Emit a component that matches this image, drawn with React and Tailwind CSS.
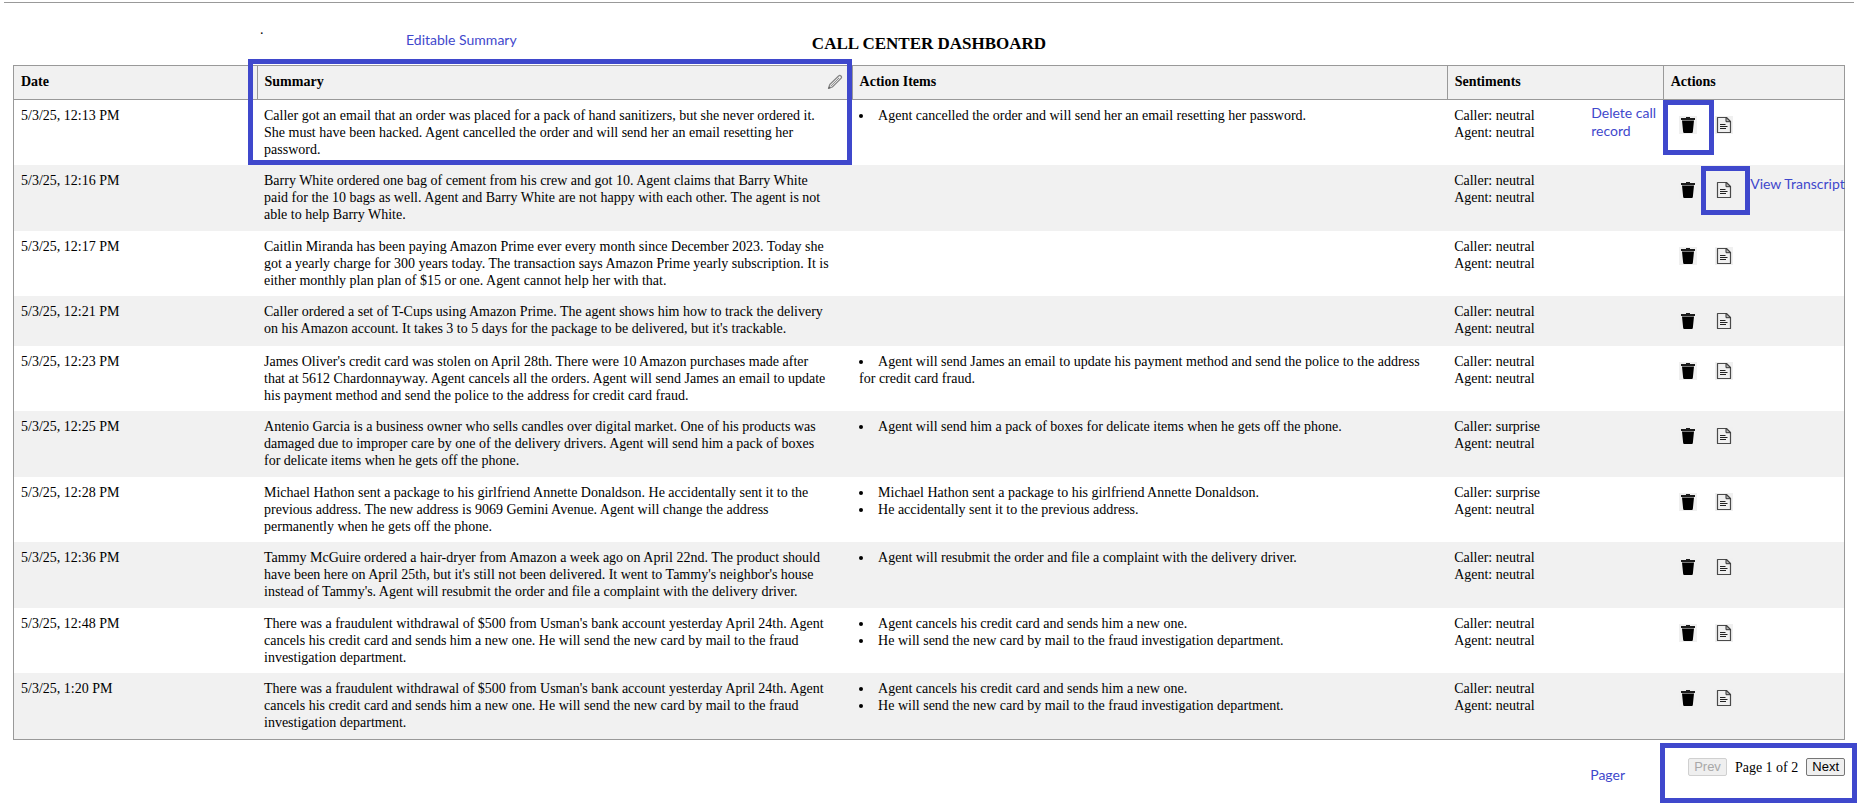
import React from "react";

const calls = [
  {
    date: "5/3/25, 12:13 PM",
    summary:
      "Caller got an email that an order was placed for a pack of hand sanitizers, but she never ordered it. She must have been hacked. Agent cancelled the order and will send her an email resetting her password.",
    items: ["Agent cancelled the order and will send her an email resetting her password."],
    caller: "neutral",
    agent: "neutral",
    note: "delete",
  },
  {
    date: "5/3/25, 12:16 PM",
    summary:
      "Barry White ordered one bag of cement from his crew and got 10. Agent claims that Barry White paid for the 10 bags as well. Agent and Barry White are not happy with each other. The agent is not able to help Barry White.",
    items: [],
    caller: "neutral",
    agent: "neutral",
    note: "transcript",
  },
  {
    date: "5/3/25, 12:17 PM",
    summary:
      "Caitlin Miranda has been paying Amazon Prime ever every month since December 2023. Today she got a yearly charge for 300 years today. The transaction says Amazon Prime yearly subscription. It is either monthly plan plan of $15 or one. Agent cannot help her with that.",
    items: [],
    caller: "neutral",
    agent: "neutral",
  },
  {
    date: "5/3/25, 12:21 PM",
    summary:
      "Caller ordered a set of T-Cups using Amazon Prime. The agent shows him how to track the delivery on his Amazon account. It takes 3 to 5 days for the package to be delivered, but it's trackable.",
    items: [],
    caller: "neutral",
    agent: "neutral",
  },
  {
    date: "5/3/25, 12:23 PM",
    summary:
      "James Oliver's credit card was stolen on April 28th. There were 10 Amazon purchases made after that at 5612 Chardonnayway. Agent cancels all the orders. Agent will send James an email to update his payment method and send the police to the address for credit card fraud.",
    items: [
      "Agent will send James an email to update his payment method and send the police to the address for credit card fraud.",
    ],
    caller: "neutral",
    agent: "neutral",
  },
  {
    date: "5/3/25, 12:25 PM",
    summary:
      "Antenio Garcia is a business owner who sells candles over digital market. One of his products was damaged due to improper care by one of the delivery drivers. Agent will send him a pack of boxes for delicate items when he gets off the phone.",
    items: ["Agent will send him a pack of boxes for delicate items when he gets off the phone."],
    caller: "surprise",
    agent: "neutral",
  },
  {
    date: "5/3/25, 12:28 PM",
    summary:
      "Michael Hathon sent a package to his girlfriend Annette Donaldson. He accidentally sent it to the previous address. The new address is 9069 Gemini Avenue. Agent will change the address permanently when he gets off the phone.",
    items: [
      "Michael Hathon sent a package to his girlfriend Annette Donaldson.",
      "He accidentally sent it to the previous address.",
    ],
    caller: "surprise",
    agent: "neutral",
  },
  {
    date: "5/3/25, 12:36 PM",
    summary:
      "Tammy McGuire ordered a hair-dryer from Amazon a week ago on April 22nd. The product should have been here on April 25th, but it's still not been delivered. It went to Tammy's neighbor's house instead of Tammy's. Agent will resubmit the order and file a complaint with the delivery driver.",
    items: ["Agent will resubmit the order and file a complaint with the delivery driver."],
    caller: "neutral",
    agent: "neutral",
  },
  {
    date: "5/3/25, 12:48 PM",
    summary:
      "There was a fraudulent withdrawal of $500 from Usman's bank account yesterday April 24th. Agent cancels his credit card and sends him a new one. He will send the new card by mail to the fraud investigation department.",
    items: [
      "Agent cancels his credit card and sends him a new one.",
      "He will send the new card by mail to the fraud investigation department.",
    ],
    caller: "neutral",
    agent: "neutral",
  },
  {
    date: "5/3/25, 1:20 PM",
    summary:
      "There was a fraudulent withdrawal of $500 from Usman's bank account yesterday April 24th. Agent cancels his credit card and sends him a new one. He will send the new card by mail to the fraud investigation department.",
    items: [
      "Agent cancels his credit card and sends him a new one.",
      "He will send the new card by mail to the fraud investigation department.",
    ],
    caller: "neutral",
    agent: "neutral",
  },
];

function TrashIcon() {
  return (
    <svg viewBox="0 0 18 18" className="block size-[18px]" aria-hidden="true">
      <path d="M7 1h4v1h5v2H2V2h5z" fill="#1c1c1c" />
      <path d="M3 4.600h12l-1.200 11.600a1 1 0 0 1-1 .8H5.200a1 1 0 0 1-1-.8z" fill="#000" />
    </svg>
  );
}

function TranscriptIcon() {
  return (
    <svg viewBox="0 0 18 18" className="block size-[18px]" fill="none" aria-hidden="true">
      <path d="M2.500 1.500h9l4 4v11h-13z" stroke="#4a4a4a" strokeWidth="1.200" strokeLinejoin="round" />
      <path d="M11 1.500v4.200h4.500z" stroke="#333" strokeWidth="1" fill="#bbb" />
      <path d="M5 8.500h5.500M5 10.500h7.500M5 12.500h6" stroke="#222" strokeWidth="1" />
    </svg>
  );
}

function PencilIcon() {
  return (
    <svg viewBox="0 0 16 16" className="block size-4" fill="none" aria-hidden="true">
      <path
        d="M1.500 14.500l1.300-4L11.600 2a1.600 1.600 0 0 1 2.400 2.300l-8.700 8.700z"
        stroke="#858585"
        strokeWidth="1.200"
        strokeLinejoin="round"
      />
      <path d="M3.600 12.300L12 4M10.300 3.200l2.500 2.500" stroke="#8d8d8d" strokeWidth="1" />
      <path d="M1.300 14.700l.8-2.400 1.600 1.600z" fill="#666" />
    </svg>
  );
}

const noteText = "absolute font-['Lato',sans-serif] text-[14px] leading-[18px] font-normal text-[#3f48cc]";
const noteBox = "pointer-events-none absolute border-5 border-[#3f48cc]";
const headCell = "relative border border-[#999] px-[7px] pt-[7px] pb-[9px] text-left font-bold";
const bodyCell = "px-[7px] pt-[7px] pb-[7px] align-top group-even:pb-2";
const textCell = "pl-[7px] pr-5 pt-[7px] pb-[7px] align-top group-even:pb-2";

function CallRow({ call }) {
  return (
    <tr className="group h-[50px] even:bg-[#f1f1f1]">
      <td className={bodyCell}>{call.date}</td>
      <td className={textCell}>{call.summary}</td>
      <td className={textCell}>
        {call.items.length > 0 && (
          <ul className="list-inside list-disc">
            {call.items.map((item) => (
              <li key={item}>{item}</li>
            ))}
          </ul>
        )}
      </td>
      <td className={bodyCell + " relative"}>
        <p>Caller: {call.caller}</p>
        <p>Agent: {call.agent}</p>
        {call.note === "delete" && (
          <p className={noteText + " top-1 right-1 w-[68px]"}>Delete call record</p>
        )}
      </td>
      <td className={bodyCell + " relative"}>
        <div className="flex gap-[18px] px-[9px] pt-[9px]">
          <button type="button" aria-label="Delete" className="bg-[#f0f0f0]">
            <TrashIcon />
          </button>
          <button type="button" aria-label="Transcript" className="bg-[#f0f0f0]">
            <TranscriptIcon />
          </button>
        </div>
        {call.note === "delete" && <div className={noteBox + " top-0 left-0 h-[55px] w-[51px]"} />}
        {call.note === "transcript" && (
          <>
            <div className={noteBox + " top-px left-[38px] size-[49px]"} />
            <p className={noteText + " top-2.5 left-[87px] whitespace-nowrap"}>View Transcript</p>
          </>
        )}
      </td>
    </tr>
  );
}

export default function App() {
  return (
    <div className="bg-white pt-0.5 font-['Liberation_Serif',serif] text-[14px] leading-[17px] text-black">
      <hr className="mx-1 border-t border-[#999]" />
      <main className="mx-[13px]">
        <header className="relative pt-[31px] pb-[11px] text-center">
          <span className="absolute top-[18px] left-[247px]">.</span>
          <p className={noteText + " top-7 left-[393px]"}>Editable Summary</p>
          <h1 className="text-[17px] leading-5 font-bold">CALL CENTER DASHBOARD</h1>
        </header>
        <table className="w-full table-fixed border-collapse border border-[#999]">
          <colgroup>
            <col className="w-[13.3%]" />
            <col className="w-[32.5%]" />
            <col className="w-[32.5%]" />
            <col className="w-[11.8%]" />
            <col className="w-[9.9%]" />
          </colgroup>
          <thead className="bg-[#f1f1f1]">
            <tr>
              <th className={headCell}>Date</th>
              <th className={headCell}>
                <div className="flex items-center justify-between">
                  <span>Summary</span>
                  <button type="button" aria-label="Edit summary" className="-my-1 mr-0.5">
                    <PencilIcon />
                  </button>
                </div>
                <div className={noteBox + " -top-[7px] right-0 -left-2.5 h-[106px]"} />
              </th>
              <th className={headCell}>Action Items</th>
              <th className={headCell}>Sentiments</th>
              <th className={headCell}>Actions</th>
            </tr>
          </thead>
          <tbody>
            {calls.map((call) => (
              <CallRow key={call.date} call={call} />
            ))}
          </tbody>
        </table>
        <nav className="relative flex items-center justify-end gap-2 pt-[18px] pb-7">
          <button
            type="button"
            disabled
            className="rounded-[2px] border border-[#d0d0d0] bg-[#efefef] px-[5px] font-['Liberation_Sans',sans-serif] text-[13px] leading-4 text-[#a8a8a8]"
          >
            Prev
          </button>
          <span>Page 1 of 2</span>
          <button
            type="button"
            className="rounded-[2px] border border-[#767676] bg-[#efefef] px-[5px] font-['Liberation_Sans',sans-serif] text-[13px] leading-4"
          >
            Next
          </button>
          <div className={noteBox + " top-[3px] -right-3 h-[60px] w-[197px]"} />
          <p className={noteText + " top-[26px] right-[220px]"}>Pager</p>
        </nav>
      </main>
    </div>
  );
}
